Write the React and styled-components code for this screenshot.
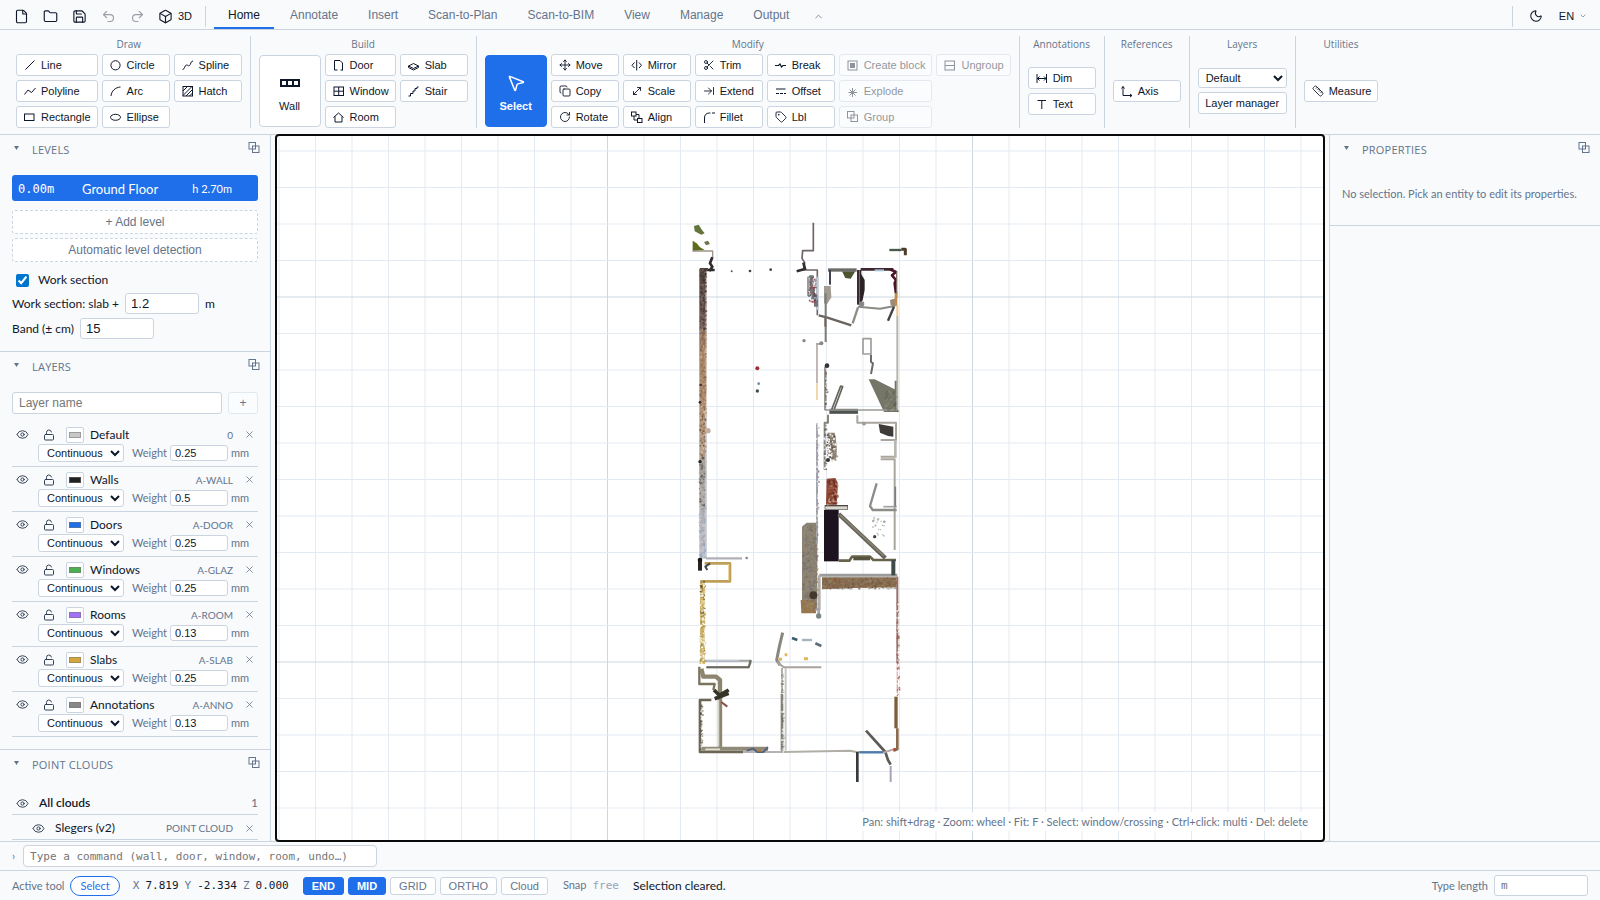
import React, { useState } from "react";
import styled, { createGlobalStyle } from "styled-components";
import {
  Eye, LockOpen, X, File, Folder, Save, Undo2, Redo2, Box, Moon, ChevronDown, ChevronUp,
  Move, Scissors, Copy, MoveDiagonal, ArrowRightToLine, RotateCw, Tag, Ruler, MousePointer2,
} from "lucide-react";

const ui = `Lato, "Open Sans", sans-serif`;
const arial = `"Liberation Sans", Arial, sans-serif`;
const mono = `"DejaVu Sans Mono", "Liberation Mono", monospace`;
const c = { ink: "#0f172a", muted: "#64748b", line: "#cbd5e1", blue: "#1f6feb", bg: "#f8fafc" };

const Global = createGlobalStyle`
  *, *::before, *::after { box-sizing: border-box; }
  body { margin: 0; background: ${c.bg}; color: ${c.ink}; font: 12px/18px ${ui}; }
  button, input, select { margin: 0; font-family: ${arial}; color: inherit; }
`;

const Page = styled.div`display: flex; flex-direction: column; height: 100vh; overflow: hidden;`;

/* top bar */
const TopBar = styled.header`
  display: flex; align-items: stretch; height: 30px; padding: 0 4px 0 7px;
  border-bottom: 1px solid ${c.line};
`;
const QuickButton = styled.button`
  display: flex; align-items: center; justify-content: center; gap: 5px;
  min-width: 29px; padding: 3px 0 0; border: 0; background: none;
  font: 500 11px/14px ${arial}; opacity: ${(p) => (p.disabled ? 0.4 : 1)};
`;
const CubeButton = styled(QuickButton)`min-width: 46px;`;
const Rule = styled.span`width: 1px; margin: 6px 8px 2px 7px; background: ${c.line};`;
const Tabs = styled.nav`display: flex; gap: 2px;`;
const Tab = styled.button`
  padding: 2px 14px 0; border: 0; background: none; font-size: 12px; line-height: 24px;
  color: ${(p) => (p.$on ? c.ink : c.muted)};
  border-bottom: 2px solid ${(p) => (p.$on ? c.blue : "transparent")};
`;
const Collapse = styled.button`
  display: flex; align-items: center; padding: 3px 8px 0; margin-left: 2px; border: 0; background: none; color: ${c.muted};
`;
const Spacer = styled.span`flex: 1;`;

/* ribbon */
const Ribbon = styled.section`
  display: flex; height: 105px; padding: 6px 8px; border-bottom: 1px solid ${c.line};
`;
const Group = styled.div`
  display: flex; flex-direction: column; padding: 0 8px;
  & + & { border-left: 1px solid ${c.line}; }
`;
const GroupTitle = styled.h2`
  margin: 1px 0 2px; text-align: center; font: 10px/15px "Open Sans", sans-serif; color: ${c.muted};
`;
const GroupBody = styled.div`display: flex; flex: 1; align-items: center; gap: 4px;`;
const ToolGrid = styled.div`
  display: grid; grid-auto-flow: column; gap: 4px;
  grid-template-rows: repeat(${(p) => p.$rows || 3}, 22px);
`;
const ToolButton = styled.button`
  display: flex; align-items: center; gap: 4px; min-width: 68px; height: 22px; padding: 0 6px;
  border: 1px solid ${c.line}; border-radius: 3px; background: #fff;
  font-size: 11px; line-height: 14px; white-space: nowrap;
  opacity: ${(p) => (p.disabled ? 0.45 : 1)};
  svg { flex: none; }
  &:disabled { color: ${c.ink}; }
`;
const IconSlot = styled.span`display: flex; align-items: center; justify-content: center; width: 14px; height: 14px;`;
const BigTool = styled.button`
  display: flex; flex-direction: column; align-items: center; justify-content: center; gap: 6px;
  width: 62px; height: 72px; padding: 4px 0 0; border-radius: 4px; font-size: 11px; line-height: 14px;
  border: 1px solid ${(p) => (p.$on ? c.blue : c.line)};
  background: ${(p) => (p.$on ? c.blue : "#fff")};
  color: ${(p) => (p.$on ? "#fff" : c.ink)};
  font-weight: ${(p) => (p.$on ? 700 : 400)};
`;
const LayerStack = styled.div`display: flex; flex-direction: column; gap: 4px;`;
const LayerSelect = styled.select`
  width: 89px; height: 20px; padding: 0 3px; border: 1px solid ${c.line}; border-radius: 3px; background: #fff; font-size: 11px;
`;
const PlainButton = styled.button`
  width: 89px; height: 22px; padding: 0; border: 1px solid ${c.line}; border-radius: 3px; background: #fff; font-size: 11px;
`;

/* panels */
const Body = styled.main`display: flex; flex: 1; min-height: 0;`;
const Side = styled.aside`
  flex: none; width: 271px; overflow: hidden;
  border: 0 solid ${c.line};
  border-${(p) => p.$edge}-width: 1px;
`;
const Section = styled.section`padding: 6px 12px 12px; border-bottom: 1px solid ${c.line};`;
const SectionHead = styled.header`
  display: flex; align-items: center; height: 18px; margin-bottom: 16px; color: ${c.muted};
`;
const Fold = styled.button`
  width: 20px; height: 18px; padding: 0 0 4px 2px; border: 0; background: none; color: ${c.muted};
  display: flex; align-items: center;
`;
const SectionTitle = styled.h2`
  flex: 1; margin: 0; font: 11px/18px "Open Sans", sans-serif; letter-spacing: 0.02em; text-transform: uppercase;
`;
const DockButton = styled.button`
  display: flex; padding: 0 0 4px; margin-right: -3px; border: 0; background: none; color: ${c.muted};
`;
const Level = styled.button`
  display: flex; align-items: center; width: 100%; height: 26px; padding: 1px 26px 0 6px; margin-bottom: 9px;
  border: 0; border-radius: 3px; background: ${c.blue}; color: #fff; font: 13px/18px ${ui};
  span:nth-child(1) { font: 12px/18px ${mono}; width: 64px; text-align: left; }
  span:nth-child(2) { flex: 1; text-align: left; }
  span:nth-child(3) { font-size: 11px; }
`;
const DashedButton = styled.button`
  display: block; width: 100%; height: 24px; margin-bottom: 4px; padding: 0;
  border: 1px dashed ${c.line}; border-radius: 3px; background: #fff; color: ${c.muted}; font-size: 12px;
`;
const CheckRow = styled.label`
  display: flex; align-items: center; gap: 9px; height: 20px; margin: 8px 0 3px; padding-left: 4px;
  input { width: 13px; height: 13px; accent-color: #0075ce; }
`;
const FieldRow = styled.label`
  display: flex; align-items: center; gap: 6px; height: 21px;
  & + & { margin-top: 4px; }
`;
const Field = styled.input`
  width: 74px; height: 21px; padding: 0 5px; border: 1px solid ${c.line}; border-radius: 3px; background: #fff;
  font: 13px/18px ${arial};
`;
const AddRow = styled.form`
  display: flex; gap: 6px; margin-bottom: 8px;
  input { flex: 1; min-width: 0; height: 22px; padding: 0 6px; border: 1px solid ${c.line}; border-radius: 3px; background: #fff; font-size: 12px; }
  input::placeholder { color: #757575; }
  button { width: 30px; height: 22px; padding: 0; border: 1px solid #e2e8f0; border-radius: 3px; background: #fafcfe; color: ${c.muted}; font-size: 12px; }
`;
const List = styled.ul`list-style: none; margin: 0; padding: 0;`;
const LayerItem = styled.li`height: 45px; padding-top: 4px; border-bottom: 1px solid ${c.line};`;
const LayerLine = styled.div`display: flex; align-items: center; height: 17px; padding: 0 2px 0 3px;`;
const IconButton = styled.button`
  display: flex; align-items: center; justify-content: center; flex: none; width: 14px; height: 16px;
  padding: 0; border: 0; background: none; color: ${(p) => p.$tone || "#334155"};
  & + & { margin-left: 13px; }
`;
const Swatch = styled.button`
  flex: none; width: 18px; height: 16px; padding: 4px 2px; margin: 0 6px 0 10px; border: 1px solid ${c.line}; border-radius: 2px; background: #fff;
  &::before { content: ""; display: block; height: 6px; background: ${(p) => p.$color}; border: 1px solid #7778; }
`;
const Name = styled.span`flex: 1; font-weight: ${(p) => (p.$strong ? 600 : 400)};`;
const Code = styled.span`font-size: 10px; color: ${c.muted}; margin-right: 9px;`;
const StyleLine = styled.div`
  display: flex; align-items: center; height: 18px; margin-top: 1px; padding-left: 26px; font-size: 11px; color: ${c.muted};
  select { width: 86px; height: 18px; margin-right: 8px; padding: 0 4px; border: 1px solid ${c.line}; border-radius: 3px; background: #fff; color: ${c.ink}; font-size: 11px; }
  label { display: flex; align-items: center; gap: 3px; }
  input { width: 58px; height: 16px; padding: 0 4px; border: 1px solid ${c.line}; border-radius: 3px; background: #fff; color: ${c.ink}; font-size: 11px; }
`;
const CloudItem = styled.li`
  display: flex; align-items: center; height: 25px; padding: 2px ${(p) => (p.$child ? 2 : 0)}px 0 ${(p) => (p.$child ? 19 : 3)}px;
  border-bottom: 1px solid ${c.line};
  ${Name} { margin-left: 10px; }
`;
const Count = styled.span`color: ${c.muted};`;
const Empty = styled.p`margin: 0; padding: 10px 0; font-size: 11px; color: ${c.muted};`;

/* canvas */
const Stage = styled.div`
  position: relative; flex: 1; min-width: 0; margin: 0 5px; background: #fff;
  outline: 2px solid #0a0a0a; outline-offset: -1px; border-radius: 3px;
  svg { display: block; width: 100%; height: 100%; }
`;
const Hint = styled.p`
  position: absolute; right: 10px; bottom: 10px; margin: 0; padding: 2px 6px; border-radius: 3px;
  background: rgba(255, 255, 255, 0.92); font-size: 11px; line-height: 15px; color: ${c.muted};
`;

/* bottom bars */
const CommandBar = styled.form`
  display: flex; align-items: center; height: 29px; padding: 0 12px; border-top: 1px solid ${c.line};
  label { display: flex; align-items: center; gap: 8px; font-size: 11px; color: ${c.muted}; }
  input { width: 354px; height: 22px; padding: 0 6px; border: 1px solid ${c.line}; border-radius: 4px; background: #fff; font: 11px/14px ${mono}; }
  input::placeholder { color: #757575; }
`;
const StatusBar = styled.footer`
  display: flex; align-items: center; height: 30px; padding: 0 12px; border-top: 1px solid ${c.line};
  font-size: 11px; color: ${c.muted};
`;
const Pill = styled.span`
  height: 20px; margin: 0 13px 0 6px; padding: 0 9px; border: 1px solid ${c.blue}; border-radius: 10px; background: #fff; color: ${c.blue}; line-height: 18px;
`;
const Coords = styled.span`
  display: flex; gap: 6px; margin-right: 14px; font: 11px/18px ${mono};
  b { font-weight: 400; color: ${c.ink}; }
`;
const Snaps = styled.div`display: flex; gap: 4px;`;
const Snap = styled.button`
  height: 18px; padding: 0 8px; border-radius: 3px; font-size: 11px; line-height: 14px;
  border: 1px solid ${(p) => (p.$on ? c.blue : c.line)};
  background: ${(p) => (p.$on ? c.blue : "#fff")};
  color: ${(p) => (p.$on ? "#fff" : c.muted)};
  font-weight: ${(p) => (p.$on ? 700 : 400)};
`;
const SnapState = styled.span`margin-left: 15px; code { margin: 0 14px 0 6px; font: 11px/18px ${mono}; color: #94a3b8; }`;
const Message = styled.output`font-size: 12px; color: ${c.ink};`;
const LengthField = styled.label`
  display: flex; align-items: center; gap: 6px;
  input { width: 94px; height: 21px; padding: 0 6px; border: 1px solid ${c.line}; border-radius: 3px; background: #fff; font: 11px/14px ${mono}; }
  input::placeholder { color: #757575; }
`;

const Glyph = ({ children, size = 14 }) => (
  <svg width={size} height={size} viewBox="0 0 14 14" fill="none" stroke="currentColor" strokeWidth="1">{children}</svg>
);
const L = (Icon) => <IconSlot><Icon size={12} strokeWidth={1.8} /></IconSlot>;
const icons = {
  Line: <Glyph><path d="M2.500 11.500 11.500 2.500" /></Glyph>,
  Polyline: <Glyph><path d="M1.500 10.500 5 6l3.500 2.500 4-4.500" /></Glyph>,
  Rectangle: <Glyph><rect x="1.500" y="4" width="9.500" height="6.500" /></Glyph>,
  Circle: <Glyph><circle cx="6.500" cy="7.300" r="4.600" /></Glyph>,
  Arc: <Glyph><path d="M2 12C2.500 7 6 3.500 11.500 3" /></Glyph>,
  Ellipse: <Glyph><ellipse cx="6.500" cy="7.300" rx="5" ry="3" /></Glyph>,
  Spline: <Glyph><path d="M1.500 11.500c2.500 0 2-4.500 4-4.500s1.500 1.500 3 .5 1-4.500 3.500-4.500" /></Glyph>,
  Hatch: <Glyph><rect x="2" y="2.500" width="9.500" height="9.500" /><path d="M2 7 6.500 2.500M2 11.500 11 2.500M5 12l6.500-6.500M8.500 12l3-3" /></Glyph>,
  Door: <Glyph><path d="M2.500 12V2.500h5.500L10.500 5v7M2.500 12h3M8.500 12h2.500" /></Glyph>,
  Window: <Glyph><rect x="2" y="3" width="9.500" height="8.500" /><path d="M6.700 3v8.500M2 7.200h9.500" /></Glyph>,
  Room: <Glyph><path d="M1.500 7.500 6.500 3l5 4.500M3 6.500V12h7V6.500" /></Glyph>,
  Slab: <Glyph><path d="M1.500 8 6.500 5.500l5 2.500-5 2.500zM1.500 8v1.500L6.500 12l5-2.500V8" /></Glyph>,
  Stair: <Glyph><path d="M1.500 12h2V9.500h2.500V7H8V4.500h2V3h1.500" /></Glyph>,
  Move: L(Move), Trim: L(Scissors), Copy: L(Copy), Scale: L(MoveDiagonal), Extend: L(ArrowRightToLine),
  Rotate: L(RotateCw), Lbl: L(Tag), Measure: L(Ruler),
  Mirror: <Glyph><path d="M4.500 4.500 2 7.300l2.500 2.700M9 4.500l2.500 2.800L9 10M6.700 2V12.500" /></Glyph>,
  Break: <Glyph><path strokeWidth="1.200" d="M1 7.500h3.500L6 6l1.500 3L9 7.500h3" /></Glyph>,
  Offset: <Glyph><path d="M2 5h9.500" /><path strokeDasharray="3 1" d="M2 9.500h10" /></Glyph>,
  Align: <Glyph><rect x="1.500" y="2" width="4.500" height="4" /><rect x="7.500" y="8.500" width="4.500" height="4" /><path d="M4 6v4h3.500M6 4.500h3v4" /></Glyph>,
  Fillet: <Glyph><path d="M2.500 13V8c0-3 1.500-5 5-5h1M10 3h3" /></Glyph>,
  "Create block": <Glyph><rect x="2" y="3" width="9" height="9" /><rect x="4.500" y="5.500" width="4" height="4" fill="currentColor" /></Glyph>,
  Explode: <Glyph><path d="M6.500 4v9M2.500 8.500h8.500M3.500 5.500l6 6M9.500 5.500l-6 6" /></Glyph>,
  Group: <Glyph><rect x="1.500" y="1.500" width="6.500" height="6.500" /><rect x="5" y="5" width="6.500" height="6.500" /></Glyph>,
  Ungroup: <Glyph><rect x="2" y="3" width="9.500" height="9" /><path d="M2 7.500h9.500" /></Glyph>,
  Dim: <Glyph><path d="M2 3v9M11.500 3v9M2 7.500h9.500M4.500 5.500l-2 2 2 2M9 5.500l2 2-2 2" /></Glyph>,
  Text: <Glyph><path d="M2.500 3.500H11M6.800 3.500V12" /></Glyph>,
  Axis: <Glyph><path d="M3 2.500v9h9M1.500 4.500 3 2.500l1.500 2M10 10l2 1.500-2 1.500" /></Glyph>,
};
const Dock = () => (
  <Glyph><rect x="2" y="1.500" width="6.500" height="6.500" /><rect x="5.500" y="5" width="6.500" height="6.500" /></Glyph>
);

const Tool = ({ name, disabled }) => <ToolButton disabled={disabled}>{icons[name]}{name}</ToolButton>;
const Tools = ({ names, off = [], rows }) => (
  <ToolGrid $rows={rows}>{names.map((n) => <Tool key={n} name={n} disabled={off.includes(n)} />)}</ToolGrid>
);

const tabs = ["Home", "Annotate", "Insert", "Scan-to-Plan", "Scan-to-BIM", "View", "Manage", "Output"];
const layers = [
  ["Default", "0", "#c8c8c8", "0.25"],
  ["Walls", "A-WALL", "#222222", "0.5"],
  ["Doors", "A-DOOR", "#1f6feb", "0.25"],
  ["Windows", "A-GLAZ", "#4caf50", "0.25"],
  ["Rooms", "A-ROOM", "#a371f7", "0.13"],
  ["Slabs", "A-SLAB", "#d4a73c", "0.25"],
  ["Annotations", "A-ANNO", "#888888", "0.13"],
];

/* scan slice: strokes as [path, colour, width] in thirds of a pixel */
const strokes = [
  ["M400 38V122H368L366 145L374 158L370 180H412V316", "#6f6468", 5],
  ["M413 200V300", "#b9cbd8", 6],
  ["M38 123H98V145", "#a09488", 4],
  ["M97 142L90 160L97 170L88 184M80 180H104", "#2e2a2c", 8],
  ["M60 178H84", "#4a4040", 8],
  ["M78 600V1040", "#ccd0d6", 5],
  ["M77 200V580", "#b8a498", 3],
  ["M370 158L376 180M350 184L372 178", "#302c30", 8],
  ["M384 200V256H394M386 200H402", "#8a8a8c", 5],
  ["M394 196V240L408 270V290", "#77777a", 12],
  ["M628 120H664", "#4b5a4c", 7],
  ["M664 118H676V136", "#4a3c28", 9],
  ["M416 316L440 322L514 346", "#6a6460", 7],
  ["M518 340L534 292", "#8c8c88", 7],
  ["M534 290L600 296L644 288", "#8a8a86", 6],
  ["M444 180H530", "#6c6c6a", 10],
  ["M450 180V224", "#45424e", 6],
  ["M534 180V284", "#3a2c30", 6],
  ["M542 178H640", "#3c2830", 8],
  ["M541 180V286", "#2d2326", 6],
  ["M584 181H612", "#a6c0d8", 6],
  ["M630 178L648 186L636 196L648 210L644 220L648 250", "#4c1424", 8],
  ["M650 184V262", "#7c6a68", 4],
  ["M648 250V288", "#c08a4c", 8],
  ["M652 286V318", "#efc690", 6],
  ["M642 290L624 332", "#3f4244", 7],
  ["M652 318V600", "#b4b4b0", 6],
  ["M437 250V396", "#7c7c78", 6],
  ["M436 318V350", "#77665e", 6],
  ["M436 470V600", "#88847c", 7],
  ["M408 402H424", "#9a9a98", 5],
  ["M411 404V520", "#b5aaa8", 5],
  ["M411 520V570", "#efd0a0", 5],
  ["M549 386H573V432H549Z", "#a09c98", 5],
  ["M573 434V456L579 460L573 492", "#6a6a68", 6],
  ["M454 602L482 528L488 530L462 600", "#66645e", 5],
  ["M448 604H534", "#4d5450", 15],
  ["M434 600H654", "#9a9894", 5],
  ["M444 614V638H434V780", "#85857c", 6],
  ["M532 616V638H648V690H602", "#a9a49e", 6],
  ["M552 636V646", "#a09a94", 10],
  ["M602 740H644M602 748H644V1020", "#aaa69e", 6],
  ["M646 690V744", "#b9b6b0", 8],
  ["M411 640V1000", "#aaa8ac", 6],
  ["M411 700V880", "#9fa0b4", 3],
  ["M590 820L570 888L578 900H650", "#8c8c88", 7],
  ["M610 890H650", "#a2a29e", 5],
  ["M646 830V890", "#77807c", 5],
  ["M434 892H504", "#4c4944", 14],
  ["M436 893H502", "#d9d7d0", 8],
  ["M476 912L616 1044", "#67635a", 13],
  ["M480 915L612 1038", "#8a8674", 5],
  ["M476 1052H508L516 1040H570L580 1050H648", "#68644c", 8],
  ["M520 1046H570", "#55523e", 10],
  ["M418 1096H652", "#9a9c9c", 9],
  ["M418 1096V1200", "#b2b0ac", 8],
  ["M640 1050V1096", "#404a48", 12],
  ["M652 1100V1360", "#96706a", 6],
  ["M652 1360V1450", "#d8a8a0", 4],
  ["M648 1460V1555", "#7e6038", 10],
  ["M652 1555V1618L640 1622", "#8a6c50", 8],
  ["M78 1045H186", "#b0b0b8", 7],
  ["M74 1060H150V1114H66", "#bf9f58", 8],
  ["M146 1062V1112", "#ead49c", 3],
  ["M60 1050V1082", "#2a2420", 12],
  ["M90 1060L76 1070L82 1080", "#404a48", 6],
  ["M72 1352H212V1358L206 1372H78", "#a0a4a2", 6],
  ["M80 1352H178", "#c8cce4", 3],
  ["M212 1350L206 1372H80", "#6c685c", 6],
  ["M58 1370V1422H104L100 1440", "#7a745c", 7],
  ["M64 1376L70 1400H108L120 1410V1612", "#8e8470", 13],
  ["M116 1470V1610", "#d8d4c8", 4],
  ["M102 1440L118 1456L146 1440M104 1466L146 1450", "#343428", 11],
  ["M124 1476L142 1490", "#8a5048", 6],
  ["M94 1470H60V1626H190", "#6c6454", 8],
  ["M62 1490H68", "#5a5c54", 12],
  ["M64 1616H264", "#8f8b78", 12],
  ["M76 1618H120", "#e6e2d4", 5],
  ["M190 1626H310", "#b6b2b4", 6],
  ["M200 1622L220 1616L232 1626H250L264 1612", "#53637e", 6],
  ["M232 1622H246", "#b87c3c", 6],
  ["M308 1268L298 1310L290 1350L300 1366", "#8a8680", 9],
  ["M290 1356L312 1372H424", "#a8a49e", 6],
  ["M306 1374V1450", "#b4aeaa", 6],
  ["M306 1452V1622", "#83807a", 8],
  ["M317 1374V1622", "#cac8c4", 6],
  ["M312 1626L510 1622L530 1626H610", "#b0aea6", 6],
  ["M336 1284L352 1290", "#3c5c70", 8],
  ["M366 1290H396", "#a4b4bc", 7],
  ["M406 1300L424 1308", "#5c6c78", 8],
  ["M372 1346H384M296 1348H306M314 1334H322", "#e3b45c", 9],
  ["M532 1626V1716", "#37393c", 8],
  ["M538 1627H610", "#4d7cac", 7],
  ["M558 1562L616 1626L624 1650L632 1664", "#5c5b56", 8],
  ["M632 1668V1716", "#a9a4b8", 6],
  ["M610 1628L648 1616", "#b8a49c", 6],
  ["M640 1618H648", "#c43a3a", 7],
  ["M406 1198H416V1222", "#a8a8ac", 8],
];
const shapes = [
  ["M42 48L56 44L66 60L74 70L64 74L44 64Z", "#65743a"],
  ["M38 92L50 100L60 112L74 120L38 124Z", "#5c6c1e"],
  ["M72 96L84 92L90 102L78 106Z", "#6c744c"],
  ["M432 228H452L454 262L440 284L432 280Z", "#a19c92"],
  ["M486 184H526L512 206L496 204Z", "#4c5430"],
  ["M542 190L554 210V240L548 270L542 280Z", "#2a2427"],
  ["M630 270L650 264L646 290L632 286Z", "#9a8a78"],
  ["M566 508H584L644 538V512H654V606H612Z", "#757568"],
  ["M394 228L408 232L402 246Z", "#99323e"],
  ["M596 642L640 650V680L624 678L600 668Z", "#3e3b38"],
  ["M442 668H464L470 700V750L456 748L452 700Z", "#8b8174"],
  ["M440 806L466 804L474 820L470 884H438Z", "#8c4632"],
  ["M432 900H476V1054H432Z", "#1c1220"],
  ["M366 950L380 938H412V1200L366 1202Z", "#8a8375"],
  ["M426 1102H650V1132L520 1134L426 1138Z", "#8b7152"],
  ["M362 1170H408V1210H364Z", "#97784e"],
];
const rand = (seed) => () => ((seed = (seed * 16807) % 2147483647) / 2147483647);
/* speckle patches: [x, y, w, h, count, colours, opacity] */
const patches = [
  [58, 176, 18, 180, 220, ["#4a3d3a", "#7a6258", "#8a7a74", "#2f2626"], 0.6],
  [58, 356, 18, 220, 200, ["#9c7658", "#b08a6a", "#7c5e48", "#d0b090"], 0.6],
  [58, 576, 18, 170, 160, ["#5c4638", "#c09a78", "#a08268", "#dcc4aa"], 0.6],
  [56, 740, 18, 160, 160, ["#4c4a48", "#9a948c", "#c8c4c0", "#b0a8a0"], 0.6],
  [56, 890, 18, 150, 150, ["#8aa4c4", "#c0c8d4", "#d8c8c4", "#a6a4a8"], 0.7],
  [58, 1110, 15, 100, 90, ["#d0b050", "#6c5c28", "#e6d498", "#fff"], 0.9],
  [58, 1210, 15, 150, 120, ["#9c8a3c", "#c8ac54", "#f0e4bc", "#fff"], 0.9],
  [366, 945, 45, 255, 420, ["#7c7264", "#9a9280", "#6a6870", "#a58a64"], 0.5],
  [426, 1102, 224, 32, 400, ["#6c563e", "#a08a6c", "#8c5438", "#7c7468"], 0.5],
  [440, 808, 32, 74, 90, ["#6c2a1e", "#b06a50", "#53201a", "#ddc0b4"], 0.6],
  [384, 200, 24, 80, 60, ["#5a6c88", "#a03c44", "#e0e0e0", "#3c3c40"], 0.8],
  [440, 670, 30, 80, 70, ["#fff", "#5c4c40", "#a09484"], 0.9],
  [574, 920, 40, 60, 22, ["#b4b8b0", "#8c8c88"], 0.8],
  [612, 540, 40, 62, 60, ["#8c8c7c", "#5c5c50"], 0.6],
  [648, 1175, 8, 280, 70, ["#fff", "#a05c50"], 0.8],
  [60, 1480, 6, 130, 40, ["#fff", "#4c4638"], 0.6],
  [302, 1380, 8, 240, 50, ["#fff", "#6c6860"], 0.6],
  [430, 640, 8, 150, 40, ["#fff", "#5c5c58"], 0.7],
  [408, 640, 6, 300, 60, ["#fff", "#8c8c94"], 0.7],
  [434, 470, 6, 130, 30, ["#fff", "#5c5048"], 0.7],
];
const specks = patches.flatMap(([x, y, w, h, n, cols, o], i) => {
  const r = rand(91 + i * 37);
  r();
  return Array.from({ length: n }, () => [x + r() * w, y + r() * h, 3 + r() * 3, cols[Math.floor(r() * cols.length)], o]);
});
const dots = [
  [155, 184, 3, "#555"], [210, 183, 4, "#444"], [272, 179, 4, "#444"], [372, 392, 5, "#888"], [232, 475, 6, "#a02c34"],
  [236, 521, 4, "#6c88a4"], [232, 543, 5, "#3c4c48"], [441, 467, 7, "#333"], [84, 662, 8, "#c4aea0"], [200, 1044, 4, "#888"],
  [400, 1156, 12, "#44382c"], [424, 400, 6, "#888"], [60, 1050, 7, "#1c1814"], [584, 980, 5, "#444"],
  [416, 1218, 8, "#7c8488"], [545, 282, 8, "#888"], [444, 750, 6, "#333"], [60, 755, 5, "#222"], [62, 525, 4, "#433"], [60, 577, 4, "#322"],
];

const GridLines = () => {
  const lines = [];
  const tone = (i) => (i % 10 === 0 ? "#ccd7e0" : "#e4eaf1");
  for (let i = -12; i < 22; i++) {
    lines.push(<path key={"v" + i} d={`M${607.5 + i * 36.5} 0V1000`} stroke={tone(i)} />);
  }
  for (let i = -6; i < 18; i++) {
    lines.push(<path key={"h" + i} d={`M0 ${297 + i * 36.5}H1700`} stroke={tone(i)} />);
  }
  return <g strokeWidth="1">{lines}</g>;
};

const Cloud = () => (
  <g transform="translate(680 210) scale(0.33333)" fill="none" strokeLinejoin="round">
    <defs>
      <linearGradient id="wall" x1="0" y1="0" x2="0" y2="1">
        <stop offset="0" stopColor="#54443f" /><stop offset=".2" stopColor="#77605a" />
        <stop offset=".3" stopColor="#a88566" /><stop offset=".55" stopColor="#b89a80" />
        <stop offset=".7" stopColor="#a5a09a" /><stop offset="1" stopColor="#bcc4d0" />
      </linearGradient>
    </defs>
    <rect x="58" y="176" width="21" height="870" fill="url(#wall)" />
    <rect x="60" y="1110" width="14" height="250" fill="#cdb372" />
    {shapes.map(([d, f], i) => <path key={i} d={d} fill={f} />)}
    {strokes.map(([d, s, w], i) => <path key={i} d={d} stroke={s} strokeWidth={w} />)}
    {specks.map(([x, y, s, f, o], i) => <rect key={i} x={x} y={y} width={s} height={s} fill={f} opacity={o} />)}
    {dots.map(([x, y, r, f], i) => <circle key={i} cx={x} cy={y} r={r} fill={f} />)}
  </g>
);

const Panel = ({ title, children }) => {
  const [open, setOpen] = useState(true);
  return (
    <Section>
      <SectionHead>
        <Fold aria-label={`Toggle ${title}`} onClick={() => setOpen(!open)}>
          <svg width="5" height="4" viewBox="0 0 5 4"><path d="M0 0h5L2.500 4z" fill="currentColor" /></svg>
        </Fold>
        <SectionTitle>{title}</SectionTitle>
        <DockButton aria-label={`Undock ${title}`}><Dock /></DockButton>
      </SectionHead>
      {open && children}
    </Section>
  );
};

const EyeButton = () => <IconButton aria-label="Visibility"><Eye size={13} strokeWidth={1.8} /></IconButton>;

const Layer = ({ name, code, color, weight }) => (
  <LayerItem>
    <LayerLine>
      <EyeButton />
      <IconButton aria-label="Lock"><LockOpen size={12} strokeWidth={2} /></IconButton>
      <Swatch $color={color} aria-label={`${name} colour`} />
      <Name>{name}</Name>
      <Code>{code}</Code>
      <IconButton $tone={c.muted} aria-label={`Delete ${name}`}><X size={11} strokeWidth={1.7} /></IconButton>
    </LayerLine>
    <StyleLine>
      <select aria-label={`${name} line type`} defaultValue="Continuous"><option>Continuous</option><option>Dashed</option></select>
      <label>Weight <input defaultValue={weight} /> mm</label>
    </StyleLine>
  </LayerItem>
);

export default function App() {
  const [tab, setTab] = useState("Home");
  const q = (Icon, label, disabled) => (
    <QuickButton aria-label={label} disabled={disabled}><Icon size={15} strokeWidth={1.8} /></QuickButton>
  );
  return (
    <Page>
      <Global />
      <TopBar>
        {q(File, "New")}{q(Folder, "Open")}{q(Save, "Save")}{q(Undo2, "Undo", true)}{q(Redo2, "Redo", true)}
        <CubeButton><Box size={15} strokeWidth={1.8} />3D</CubeButton>
        <Rule />
        <Tabs>{tabs.map((t) => <Tab key={t} $on={t === tab} onClick={() => setTab(t)}>{t}</Tab>)}</Tabs>
        <Collapse aria-label="Collapse ribbon"><ChevronUp size={11} strokeWidth={1.7} /></Collapse>
        <Spacer />
        <Rule />
        <QuickButton aria-label="Dark mode"><Moon size={14} strokeWidth={1.8} /></QuickButton>
        <CubeButton>EN<ChevronDown size={8} color={c.muted} /></CubeButton>
      </TopBar>

      <Ribbon>
        <Group><GroupTitle>Draw</GroupTitle><GroupBody>
          <Tools names={["Line", "Polyline", "Rectangle", "Circle", "Arc", "Ellipse", "Spline", "Hatch"]} />
        </GroupBody></Group>
        <Group><GroupTitle>Build</GroupTitle><GroupBody>
          <BigTool>
            <svg width="20" height="20" viewBox="0 0 20 20" fill="none" stroke="currentColor" strokeWidth="2"><path d="M1 7h18v6H1zM7 7v6M13 7v6" /></svg>
            Wall
          </BigTool>
          <Tools names={["Door", "Window", "Room", "Slab", "Stair"]} />
        </GroupBody></Group>
        <Group><GroupTitle>Modify</GroupTitle><GroupBody>
          <BigTool $on><MousePointer2 size={20} strokeWidth={1.8} />Select</BigTool>
          <Tools
            names={["Move", "Copy", "Rotate", "Mirror", "Scale", "Align", "Trim", "Extend", "Fillet", "Break", "Offset", "Lbl", "Create block", "Explode", "Group", "Ungroup"]}
            off={["Create block", "Explode", "Group", "Ungroup"]}
          />
        </GroupBody></Group>
        <Group><GroupTitle>Annotations</GroupTitle><GroupBody><Tools rows={2} names={["Dim", "Text"]} /></GroupBody></Group>
        <Group><GroupTitle>References</GroupTitle><GroupBody><Tools rows={1} names={["Axis"]} /></GroupBody></Group>
        <Group><GroupTitle>Layers</GroupTitle><GroupBody>
          <LayerStack>
            <LayerSelect aria-label="Active layer" defaultValue="Default">{layers.map((l) => <option key={l[0]}>{l[0]}</option>)}</LayerSelect>
            <PlainButton>Layer manager</PlainButton>
          </LayerStack>
        </GroupBody></Group>
        <Group><GroupTitle>Utilities</GroupTitle><GroupBody><Tools rows={1} names={["Measure"]} /></GroupBody></Group>
      </Ribbon>

      <Body>
        <Side $edge="right">
          <Panel title="Levels">
            <Level><span>0.00m</span><span>Ground Floor</span><span>h 2.70m</span></Level>
            <DashedButton>+ Add level</DashedButton>
            <DashedButton>Automatic level detection</DashedButton>
            <CheckRow><input type="checkbox" defaultChecked />Work section</CheckRow>
            <FieldRow>Work section: slab + <Field defaultValue="1.2" /> m</FieldRow>
            <FieldRow>Band (± cm) <Field defaultValue="15" /></FieldRow>
          </Panel>
          <Panel title="Layers">
            <AddRow onSubmit={(e) => e.preventDefault()}><input placeholder="Layer name" aria-label="Layer name" /><button>+</button></AddRow>
            <List>{layers.map(([name, code, color, weight]) => <Layer key={name} {...{ name, code, color, weight }} />)}</List>
          </Panel>
          <Panel title="Point clouds">
            <List>
              <CloudItem><EyeButton /><Name $strong>All clouds</Name><Count>1</Count></CloudItem>
              <CloudItem $child>
                <EyeButton /><Name>Slegers (v2)</Name><Code>POINT CLOUD</Code>
                <IconButton $tone={c.muted} aria-label="Remove cloud"><X size={11} strokeWidth={1.7} /></IconButton>
              </CloudItem>
            </List>
          </Panel>
        </Side>

        <Stage>
          <svg viewBox="276 135 1048 706" preserveAspectRatio="xMidYMid slice" role="img" aria-label="Floor plan scan">
            <GridLines /><Cloud />
          </svg>
          <Hint>Pan: shift+drag · Zoom: wheel · Fit: F · Select: window/crossing · Ctrl+click: multi · Del: delete</Hint>
        </Stage>

        <Side $edge="left">
          <Panel title="Properties"><Empty>No selection. Pick an entity to edit its properties.</Empty></Panel>
        </Side>
      </Body>

      <CommandBar onSubmit={(e) => e.preventDefault()}>
        <label>›<input placeholder="Type a command (wall, door, window, room, undo…)" /></label>
      </CommandBar>
      <StatusBar>
        Active tool<Pill>Select</Pill>
        <Coords>X <b>7.819</b> Y <b>-2.334</b> Z <b>0.000</b></Coords>
        <Snaps><Snap $on>END</Snap><Snap $on>MID</Snap><Snap>GRID</Snap><Snap>ORTHO</Snap><Snap>Cloud</Snap></Snaps>
        <SnapState>Snap<code>free</code></SnapState>
        <Message>Selection cleared.</Message>
        <Spacer />
        <LengthField>Type length<input placeholder="m" /></LengthField>
      </StatusBar>
    </Page>
  );
}
